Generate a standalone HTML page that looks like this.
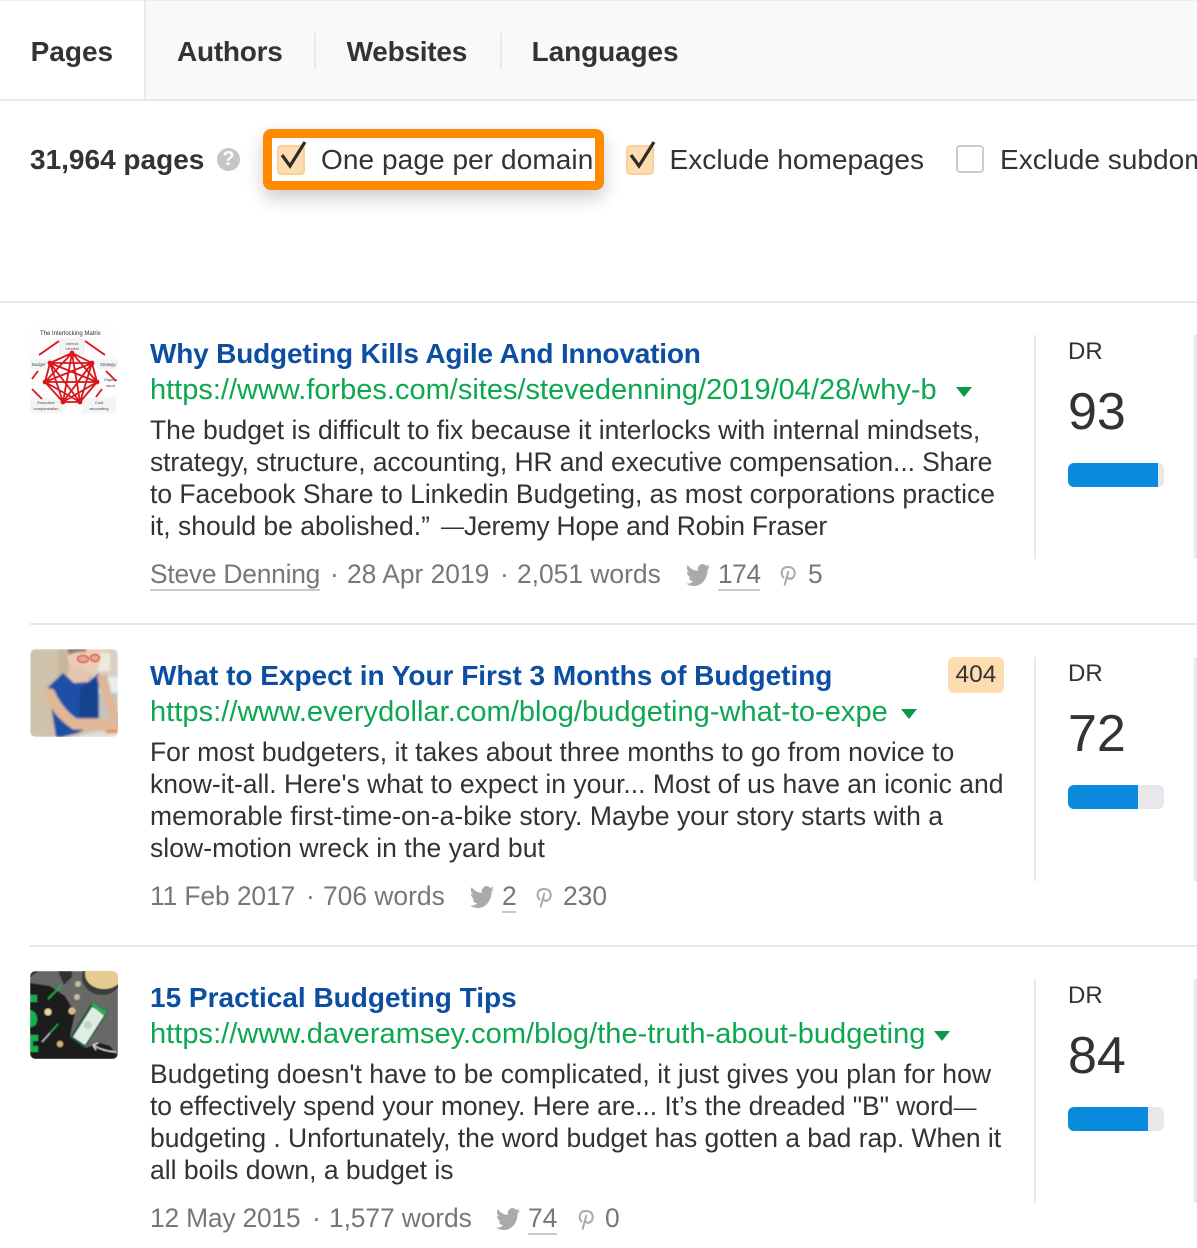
<!DOCTYPE html>
<html><head><meta charset="utf-8"><style>
html,body{margin:0;padding:0;background:#fff;overflow:hidden}
body{position:relative;width:1197px;height:1248px;overflow:hidden;font-family:"Liberation Sans",Arial,sans-serif;color:#333}
.a{position:absolute;white-space:nowrap}
.tab{font-weight:700;font-size:28px;line-height:34px;top:35px;color:#333}
.ln{position:absolute;background:#e9e9e9}
.t{position:absolute;left:150px;font-weight:700;font-size:28px;line-height:34px;color:#0b4ea2;white-space:nowrap}
.u{position:absolute;left:150px;font-size:29px;line-height:34px;color:#0da750;white-space:nowrap;letter-spacing:.03px}
.b{position:absolute;left:150px;font-size:26.5px;line-height:32px;color:#333;white-space:nowrap}
.m{position:absolute;font-size:26.4px;line-height:32px;color:#777;white-space:nowrap}
.ul{position:absolute;height:2px;background:#c8c8c8}
.tri{position:absolute;width:0;height:0;border-left:8px solid transparent;border-right:8px solid transparent;border-top:10px solid #0a9a48}
.dr{position:absolute;left:1068px;font-size:24px;line-height:30px;color:#333}
.n{position:absolute;left:1068px;font-size:52px;line-height:60px;color:#333}
.bar{position:absolute;left:1068px;width:96px;height:24px;border-radius:6px;background:#e8e8ec;overflow:hidden}
.bar i{display:block;height:24px;background:#0a8add}
.cb{position:absolute;width:24px;height:26px;border-radius:4px;background:#fddcb0;border:2px solid #f9cf9c}
svg{position:absolute}
</style></head><body>
<div class="a" style="left:0;top:0;width:1197px;height:100px;background:#f9f9f9"></div>
<div class="a" style="left:0;top:0;width:145px;height:100px;background:#fff"></div>
<div class="ln" style="left:0;top:0;width:1197px;height:1px;background:#eee"></div>
<div class="ln" style="left:0;top:99px;width:1197px;height:2px"></div>
<div class="ln" style="left:144px;top:0;width:2px;height:100px"></div>
<div class="ln" style="left:314px;top:33px;width:2px;height:36px"></div>
<div class="ln" style="left:500px;top:33px;width:2px;height:36px"></div>
<div class="a tab" style="left:30.6px">Pages</div>
<div class="a tab" style="left:177px;letter-spacing:-.25px">Authors</div>
<div class="a tab" style="left:346.6px;letter-spacing:-.25px">Websites</div>
<div class="a tab" style="left:531.6px;letter-spacing:-.1px">Languages</div>

<div class="a" style="left:30px;top:143px;font-size:28px;line-height:34px;font-weight:700;color:#333">31,964 pages</div>
<div class="a" style="left:217px;top:148px;width:23px;height:23px;border-radius:50%;background:#c6c6c6;color:#fff;font-weight:700;font-size:20px;line-height:23px;text-align:center">?</div>

<div class="a" style="left:263px;top:129px;width:341px;height:61px;box-sizing:border-box;border:9px solid #ff8a00;border-radius:8px;background:#fff;box-shadow:0 8px 18px rgba(0,0,0,.2)"></div>
<div class="cb" style="left:277px;top:145px"></div>
<svg style="left:277px;top:138px" width="30" height="36" viewBox="0 0 30 36"><path d="M5 17 L13 28 L28 4" fill="none" stroke="#2d2d2d" stroke-width="3.2"/></svg>
<div class="a" style="left:321px;top:143px;font-size:28px;line-height:34px;letter-spacing:.08px;color:#333">One page per domain</div>

<div class="cb" style="left:626px;top:145px"></div>
<svg style="left:626px;top:138px" width="30" height="36" viewBox="0 0 30 36"><path d="M5 17 L13 28 L28 4" fill="none" stroke="#2d2d2d" stroke-width="3.2"/></svg>
<div class="a" style="left:669.5px;top:143px;font-size:28.1px;line-height:34px;color:#333">Exclude homepages</div>
<div class="a" style="left:956px;top:145px;width:24px;height:24px;border:2px solid #ccc;border-radius:4px;background:#fff"></div>
<div class="a" style="left:1000px;top:143px;width:197px;height:34px;overflow:hidden;font-size:28.1px;line-height:34px;color:#333">Exclude subdom</div>

<div class="ln" style="left:0;top:301px;width:1197px;height:2px"></div>
<div class="ln" style="left:30px;top:623px;width:1167px;height:2px"></div>
<div class="ln" style="left:30px;top:945px;width:1167px;height:2px"></div>

<!-- thumb 1 -->
<svg style="left:30px;top:327px" width="88" height="88" viewBox="0 0 88 88">
<defs><filter id="b0"><feGaussianBlur stdDeviation=".35"/></filter></defs>
<rect width="88" height="88" fill="#fdfdfd"/>
<g filter="url(#b0)">
<rect x="30" y="12" width="24" height="15" rx="1.5" fill="#f4f4f4" stroke="#ddd" stroke-width=".5"/>
<rect x="0" y="32" width="26" height="10" rx="1.5" fill="#f4f4f4"/>
<rect x="66" y="32" width="22" height="10" rx="1.5" fill="#f4f4f4"/>
<rect x="0" y="71" width="33" height="15" rx="1.5" fill="#f4f4f4"/>
<rect x="53" y="71" width="33" height="15" rx="1.5" fill="#f4f4f4"/>
<text x="10" y="8" font-size="6" fill="#333" font-family="Liberation Sans">The Interlocking Matrix</text>
<text x="42" y="18" font-size="3.8" text-anchor="middle" fill="#555" font-family="Liberation Sans">Internal</text>
<text x="42" y="23" font-size="3.8" text-anchor="middle" fill="#555" font-family="Liberation Sans">mindset</text>
<text x="2" y="39" font-size="4.2" fill="#444" font-family="Liberation Sans">Budget</text>
<text x="70" y="39" font-size="4.2" fill="#444" font-family="Liberation Sans">Strategy</text>
<text x="74" y="54" font-size="3.8" fill="#444" font-family="Liberation Sans">Organis</text>
<text x="76" y="60" font-size="3.8" fill="#444" font-family="Liberation Sans">struct</text>
<text x="16" y="77" font-size="4" text-anchor="middle" fill="#444" font-family="Liberation Sans">Executive</text>
<text x="16" y="83" font-size="4" text-anchor="middle" fill="#444" font-family="Liberation Sans">compensation</text>
<text x="69" y="77" font-size="4" text-anchor="middle" fill="#444" font-family="Liberation Sans">Cost</text>
<text x="69" y="83" font-size="4" text-anchor="middle" fill="#444" font-family="Liberation Sans">accounting</text>
<g fill="none" stroke="#d8161e" stroke-width="1.8">
<path d="M42 26 L20 36 L62 36 Z M42 26 L15 55 M42 26 L67 55 M42 26 L33 75 M42 26 L50 75 M20 36 L67 55 M20 36 L50 75 M20 36 L33 75 M62 36 L15 55 M62 36 L33 75 M62 36 L50 75 M15 55 L67 55 M15 55 L50 75 M15 55 L33 75 M67 55 L33 75 M67 55 L50 75 M33 75 L50 75 M20 36 L15 55 M62 36 L67 55"/>
<path d="M29 14 L9 28 M55 14 L75 28 M8 44 L2 52 M76 44 L86 54 M2 62 L12 72 M72 62 L66 70"/>
</g>
<g fill="#d8161e"><circle cx="20" cy="36" r="2.4"/><circle cx="62" cy="36" r="2.4"/><circle cx="15" cy="55" r="2.4"/><circle cx="67" cy="55" r="2.4"/><circle cx="33" cy="75" r="2.4"/><circle cx="50" cy="75" r="2.4"/><circle cx="42" cy="26" r="2.4"/></g>
</g>
</svg>

<!-- thumb 2 -->
<svg style="left:30px;top:649px" width="88" height="88" viewBox="0 0 88 88">
<defs><clipPath id="c2"><rect width="88" height="88" rx="6"/></clipPath><filter id="bl"><feGaussianBlur stdDeviation="1.1"/></filter><filter id="bl2"><feGaussianBlur stdDeviation=".6"/></filter></defs>
<g clip-path="url(#c2)"><g filter="url(#bl)">
<rect width="88" height="88" fill="#cfc1aa"/>
<rect x="28" y="0" width="20" height="36" fill="#c6b69c"/>
<rect x="62" y="0" width="26" height="30" fill="#d8d0c2"/>
<rect x="68" y="4" width="12" height="18" fill="#efe9dc"/>
<rect x="66" y="28" width="22" height="16" fill="#e8ecec"/>
<rect x="66" y="44" width="22" height="36" fill="#c4c4c0"/>
<path d="M37 0 H70 V14 Q64 26 54 26 Q42 24 38 12Z" fill="#ecccb8"/>
<path d="M40 14 L58 22 V36 L36 34Z" fill="#e6c6ae"/>
<path d="M37 0 H56 V3 Q46 2 39 6Z" fill="#85775f"/>
<path d="M18 38 L33 24 L44 34 L58 33 L69 24 L69 72 L48 84 L32 88 L26 88 Z" fill="#1c4fa6"/>
<path d="M50 40 L66 28 L68 72 L50 72Z" fill="#17428e"/>
<path d="M20 45 Q28 64 45 75 L88 75" fill="none" stroke="#e0b898" stroke-width="11" stroke-linecap="round"/>
<path d="M72 26 Q76 48 86 70" fill="none" stroke="#ddb69c" stroke-width="10"/>
<path d="M46 88 Q60 81 88 82 V88Z" fill="#e2dcd6"/>
<rect x="76" y="81" width="12" height="3" fill="#f0851a"/>
</g>
<g filter="url(#bl2)"><ellipse cx="53" cy="10" rx="5.5" ry="3.5" fill="#e9a892" stroke="#d8604a" stroke-width="1.4"/><ellipse cx="65" cy="9" rx="4.5" ry="3.5" fill="#e9a892" stroke="#d8604a" stroke-width="1.4"/></g></g>
</svg>

<!-- thumb 3 -->
<svg style="left:30px;top:971px" width="88" height="88" viewBox="0 0 88 88">
<defs><clipPath id="c3"><rect width="88" height="88" rx="6"/></clipPath></defs>
<g clip-path="url(#c3)"><g filter="url(#bl2)">
<rect width="88" height="88" fill="#676966"/>
<path d="M0 12 L20 15 L35 25 L45 42 L40 66 L55 77 L70 72 L80 75 L88 85 V88 H0Z" fill="#1c1e1d"/>
<path d="M0 0 H8 L0 6Z" fill="#2c2c2c"/>
<path d="M28 0 H42 L42 6 L34 14Z" fill="#33332f"/>
<ellipse cx="72" cy="6" rx="20" ry="18" fill="#3a3b39"/>
<ellipse cx="74" cy="3" rx="19" ry="15" fill="#e6cc90"/>
<path d="M40 66 L62 31 L78 41 L55 77Z" fill="#1d5c3c"/>
<path d="M43 66 L62 36 L75 43 L55 74Z" fill="#e2ece6"/>
<path d="M61 34 L63 32 L77 41 L74 45Z" fill="#2fae5a"/>
<circle cx="58" cy="54" r="4" fill="#b8d8be"/>
<path d="M0 24 H7 V31 H0Z M0 39 Q8 41 7 50 Q6 56 0 56Z M0 64 H8 V70 H3 V75 H8 V81 H0Z" fill="#19b04f"/>
<path d="M18 28 L32 14" stroke="#19b04f" stroke-width="1.8"/>
<path d="M20 62 L28 53" stroke="#19b04f" stroke-width="1.4"/>
<path d="M12 71 L20 62" stroke="#bbb" stroke-width="1.4"/>
<circle cx="18" cy="41" r="3.6" fill="#e8d2a8"/><circle cx="42" cy="40" r="3.6" fill="#d8b888"/><circle cx="30" cy="73" r="3.2" fill="#d0ac7c"/><circle cx="47" cy="26" r="3" fill="#c8b8a0"/><circle cx="48" cy="13" r="3" fill="#c8b8a0"/>
<path d="M63 74 Q72 80 86 81 M63 74 L68 72 M63 74 L66 79" fill="none" stroke="#ddd" stroke-width="1.3"/>
</g></g>
</svg>

<!-- Result 1 -->
<div class="t" style="top:337px;letter-spacing:-.18px">Why Budgeting Kills Agile And Innovation</div>
<div class="u" style="top:373px;letter-spacing:0">https://www.forbes.com/sites/stevedenning/2019/04/28/why-b</div>
<div class="tri" style="left:956px;top:387px"></div>
<div class="b" style="top:414px">The budget is difficult to fix because it interlocks with internal mindsets,</div>
<div class="b" style="top:446px;letter-spacing:-.1px">strategy, structure, accounting, HR and executive compensation... Share</div>
<div class="b" style="top:478px;letter-spacing:-.03px">to Facebook Share to Linkedin Budgeting, as most corporations practice</div>
<div class="b" style="top:510px">it, should be abolished.”</div>
<div class="b" style="top:510px;left:441px;font-size:23px">—</div>
<div class="b" style="top:510px;left:464px;letter-spacing:-.24px">Jeremy Hope and Robin Fraser</div>
<div class="m" style="left:150px;top:558px;letter-spacing:-.23px">Steve Denning</div><div class="ul" style="left:150px;top:589px;width:170px"></div>
<div class="m" style="left:330px;top:558px">·</div>
<div class="m" style="left:347px;top:558px">28 Apr 2019</div>
<div class="m" style="left:500px;top:558px">·</div>
<div class="m" style="left:517px;top:558px">2,051 words</div>
<svg style="left:686px;top:564px" width="24" height="22" viewBox="0 0 24 19.5" preserveAspectRatio="none"><path fill="#aaa" d="M23.95 2.37a9.8 9.8 0 0 1-2.82.77 4.9 4.9 0 0 0 2.16-2.72 9.8 9.8 0 0 1-3.12 1.19 4.92 4.92 0 0 0-8.38 4.48A13.96 13.96 0 0 1 1.64.96a4.92 4.92 0 0 0 1.52 6.57 4.9 4.9 0 0 1-2.23-.62v.06a4.92 4.92 0 0 0 3.95 4.82 4.9 4.9 0 0 1-2.22.08 4.92 4.92 0 0 0 4.6 3.42A9.87 9.87 0 0 1 0 17.33 13.93 13.93 0 0 0 7.55 19.5c9.06 0 14-7.5 14-14v-.64a10 10 0 0 0 2.4-2.49z"/></svg>
<div class="m" style="left:718px;top:558px;letter-spacing:-.5px">174</div><div class="ul" style="left:718px;top:589px;width:42px"></div>
<svg style="left:779px;top:565px" width="18" height="22" viewBox="0 0 18 22"><path fill="none" stroke="#aaa" stroke-width="2" d="M5 13C1 9 2 2 9 2c6 0 8 5 6 9-2 4-6 3-7 1M9.5 6 5.5 20.5"/></svg>
<div class="m" style="left:808px;top:558px">5</div>
<div class="ln" style="left:1034px;top:335px;width:2px;height:224px"></div>
<div class="ln" style="left:1194px;top:335px;width:3px;height:224px"></div>
<div class="dr" style="top:337px">DR</div>
<div class="n" style="top:382px">93</div>
<div class="bar" style="top:463px"><i style="width:90px"></i></div>

<!-- Result 2 -->
<div class="t" style="top:659px;letter-spacing:-.02px">What to Expect in Your First 3 Months of Budgeting</div>
<div class="a" style="left:948px;top:657px;width:56px;height:36px;background:#fddcb0;border-radius:6px;font-size:24.5px;line-height:36px;text-align:center;color:#333">404</div>
<div class="u" style="top:695px;letter-spacing:.05px">https://www.everydollar.com/blog/budgeting-what-to-expe</div>
<div class="tri" style="left:901px;top:709px"></div>
<div class="b" style="top:736px">For most budgeters, it takes about three months to go from novice to</div>
<div class="b" style="top:768px">know-it-all. Here's what to expect in your... Most of us have an iconic and</div>
<div class="b" style="top:800px;letter-spacing:.04px">memorable first-time-on-a-bike story. Maybe your story starts with a</div>
<div class="b" style="top:832px;letter-spacing:.05px">slow-motion wreck in the yard but</div>
<div class="m" style="left:150px;top:880px;letter-spacing:-.1px">11 Feb 2017</div>
<div class="m" style="left:306px;top:880px">·</div>
<div class="m" style="left:323px;top:880px">706 words</div>
<svg style="left:470px;top:886px" width="24" height="22" viewBox="0 0 24 19.5" preserveAspectRatio="none"><path fill="#aaa" d="M23.95 2.37a9.8 9.8 0 0 1-2.82.77 4.9 4.9 0 0 0 2.16-2.72 9.8 9.8 0 0 1-3.12 1.19 4.92 4.92 0 0 0-8.38 4.48A13.96 13.96 0 0 1 1.64.96a4.92 4.92 0 0 0 1.52 6.57 4.9 4.9 0 0 1-2.23-.62v.06a4.92 4.92 0 0 0 3.95 4.82 4.9 4.9 0 0 1-2.22.08 4.92 4.92 0 0 0 4.6 3.42A9.87 9.87 0 0 1 0 17.33 13.93 13.93 0 0 0 7.55 19.5c9.06 0 14-7.5 14-14v-.64a10 10 0 0 0 2.4-2.49z"/></svg>
<div class="m" style="left:502px;top:880px">2</div><div class="ul" style="left:502px;top:911px;width:14px"></div>
<svg style="left:535px;top:887px" width="18" height="22" viewBox="0 0 18 22"><path fill="none" stroke="#aaa" stroke-width="2" d="M5 13C1 9 2 2 9 2c6 0 8 5 6 9-2 4-6 3-7 1M9.5 6 5.5 20.5"/></svg>
<div class="m" style="left:563px;top:880px">230</div>
<div class="ln" style="left:1034px;top:657px;width:2px;height:224px"></div>
<div class="ln" style="left:1194px;top:657px;width:3px;height:224px"></div>
<div class="dr" style="top:659px">DR</div>
<div class="n" style="top:704px">72</div>
<div class="bar" style="top:785px"><i style="width:70px"></i></div>

<!-- Result 3 -->
<div class="t" style="top:981px">15 Practical Budgeting Tips</div>
<div class="u" style="top:1017px;letter-spacing:.04px">https://www.daveramsey.com/blog/the-truth-about-budgeting</div>
<div class="tri" style="left:934px;top:1031px"></div>
<div class="b" style="top:1058px;letter-spacing:.03px">Budgeting doesn't have to be complicated, it just gives you plan for how</div>
<div class="b" style="top:1090px;letter-spacing:-.07px">to effectively spend your money. Here are... It’s the dreaded "B" word<span style="font-size:23px">—</span></div>
<div class="b" style="top:1122px;letter-spacing:-.04px">budgeting . Unfortunately, the word budget has gotten a bad rap. When it</div>
<div class="b" style="top:1154px">all boils down, a budget is</div>
<div class="m" style="left:150px;top:1202px;letter-spacing:-.2px">12 May 2015</div>
<div class="m" style="left:312px;top:1202px">·</div>
<div class="m" style="left:329px;top:1202px;letter-spacing:-.1px">1,577 words</div>
<svg style="left:496px;top:1208px" width="24" height="22" viewBox="0 0 24 19.5" preserveAspectRatio="none"><path fill="#aaa" d="M23.95 2.37a9.8 9.8 0 0 1-2.82.77 4.9 4.9 0 0 0 2.16-2.72 9.8 9.8 0 0 1-3.12 1.19 4.92 4.92 0 0 0-8.38 4.48A13.96 13.96 0 0 1 1.64.96a4.92 4.92 0 0 0 1.52 6.57 4.9 4.9 0 0 1-2.23-.62v.06a4.92 4.92 0 0 0 3.95 4.82 4.9 4.9 0 0 1-2.22.08 4.92 4.92 0 0 0 4.6 3.42A9.87 9.87 0 0 1 0 17.33 13.93 13.93 0 0 0 7.55 19.5c9.06 0 14-7.5 14-14v-.64a10 10 0 0 0 2.4-2.49z"/></svg>
<div class="m" style="left:528px;top:1202px">74</div><div class="ul" style="left:528px;top:1233px;width:29px"></div>
<svg style="left:577px;top:1209px" width="18" height="22" viewBox="0 0 18 22"><path fill="none" stroke="#aaa" stroke-width="2" d="M5 13C1 9 2 2 9 2c6 0 8 5 6 9-2 4-6 3-7 1M9.5 6 5.5 20.5"/></svg>
<div class="m" style="left:605px;top:1202px">0</div>
<div class="ln" style="left:1034px;top:979px;width:2px;height:224px"></div>
<div class="ln" style="left:1194px;top:979px;width:3px;height:224px"></div>
<div class="dr" style="top:981px">DR</div>
<div class="n" style="top:1026px">84</div>
<div class="bar" style="top:1107px"><i style="width:80px"></i></div>
</body></html>
